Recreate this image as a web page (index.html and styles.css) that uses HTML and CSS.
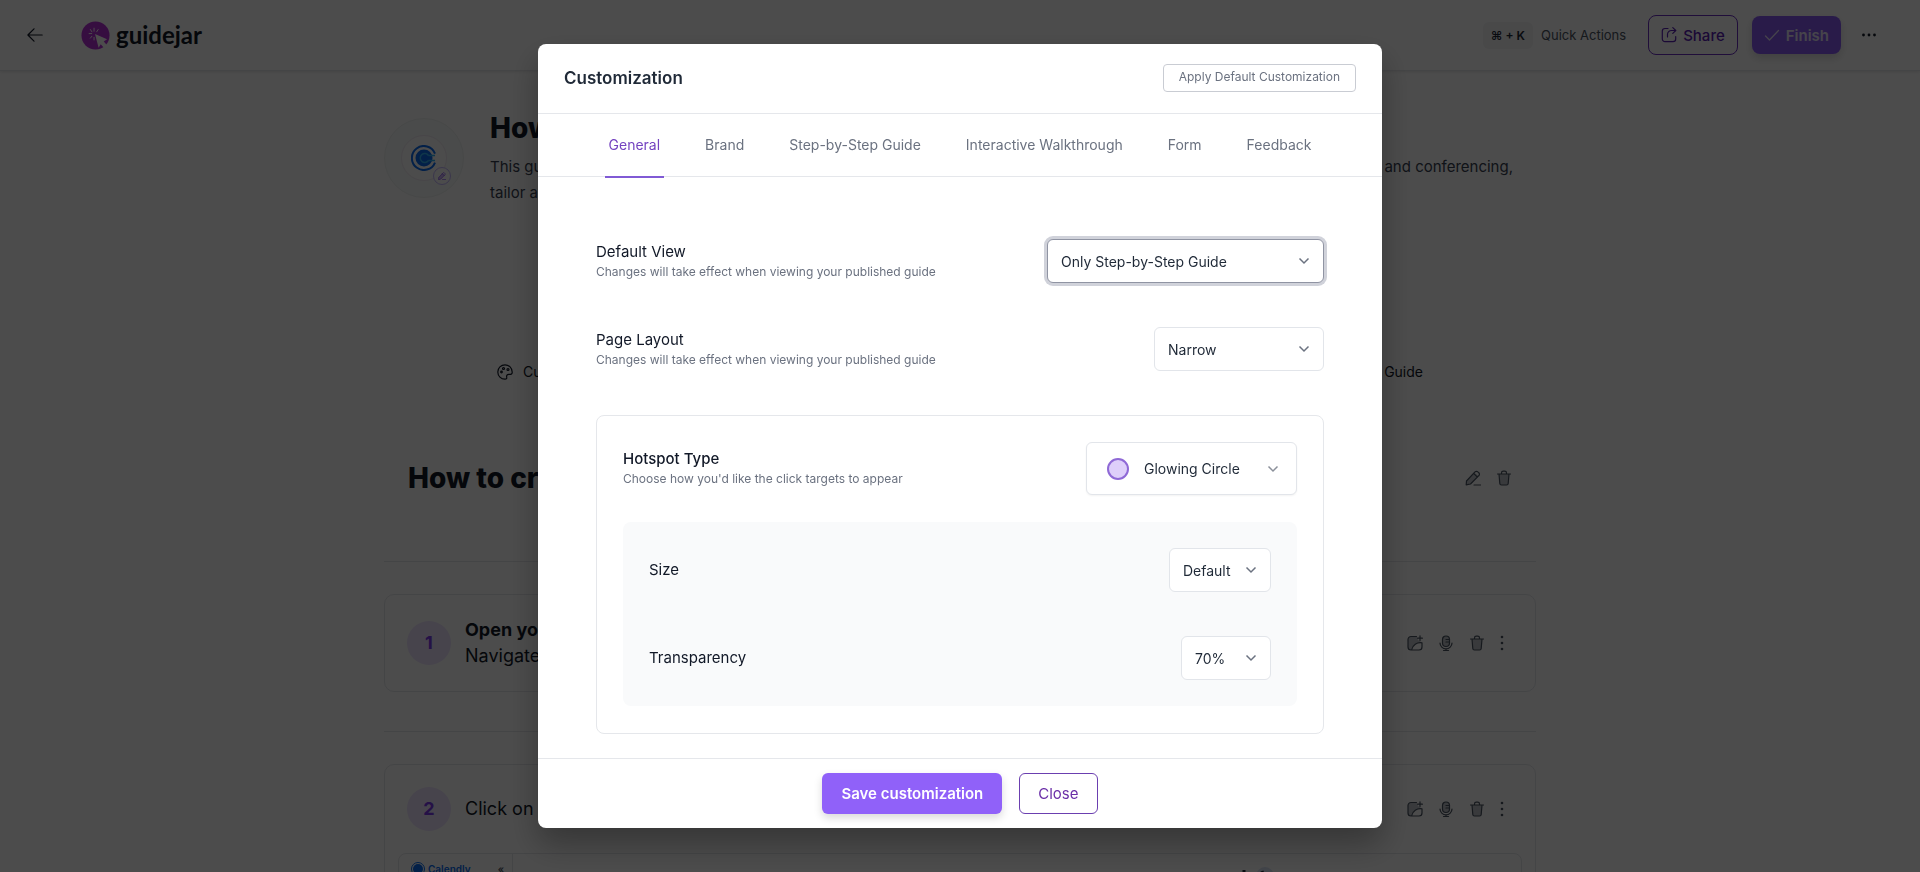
FILE: index.html
```
<!DOCTYPE html>
<html lang="en">
<head>
<meta charset="utf-8">
<meta name="viewport" content="width=device-width, initial-scale=1">
<title>Guidejar – Customization</title>
<link rel="stylesheet" href="styles.css">
</head>
<body>
<svg class="sprite" aria-hidden="true">
  <symbol id="i-trash" viewBox="0 0 16 16"><path class="tint" d="M3 4h10l-.8 9.500a1.600 1.600 0 0 1-1.600 1.500H5.400a1.600 1.600 0 0 1-1.600-1.500z"/><path d="M1.500 4h13M3 4l.8 9.500A1.600 1.600 0 0 0 5.400 15h5.200a1.600 1.600 0 0 0 1.600-1.500L13 4M5.500 4V3A1.800 1.800 0 0 1 7.300 1.200h1.400A1.800 1.800 0 0 1 10.500 3v1"/></symbol>
  <symbol id="i-image" viewBox="0 0 16 16"><path class="tint" d="M1 4.500A2.500 2.500 0 0 1 3.500 2H10l1 3 4 2.800C10 7 5.500 10 4.500 15H3.500A2.500 2.500 0 0 1 1 12.500z"/><path d="M9.500 1.500H4a3 3 0 0 0-3 3V12a3 3 0 0 0 3 3h8a3 3 0 0 0 3-3V7.800M13 .8v4.800M10.600 3.200h4.800M4.500 15c1-5 5.500-8 10.500-7.200"/></symbol>
  <symbol id="i-mic" viewBox="0 0 16 16"><rect class="tint" x="4.500" y="1" width="7" height="10.500" rx="3.500"/><rect x="4.500" y="1" width="7" height="10.500" rx="3.500"/><path d="M2 8a6 5.800 0 0 0 12 0M8 13.800V15.500M5.500 15.500h5M8 4.500h3.500M8 7h3.500"/></symbol>
  <symbol id="i-more" viewBox="0 0 16 16"><g fill="currentColor" stroke="none"><circle cx="8" cy="2" r="1.300"/><circle cx="8" cy="8" r="1.300"/><circle cx="8" cy="14" r="1.300"/></g></symbol>
  <symbol id="i-pen" viewBox="0 0 16 16"><path class="tint" d="M1 11 9 2.500 13.500 6 6 14l-4.800.9z"/><path d="M1.200 14.900 1.500 11 10 1.900a2 2 0 0 1 2.900 0l.9.900a2 2 0 0 1 0 2.900L5.500 14zM8.600 3.400l3.800 3.800M9 15h6.500"/></symbol>
  <symbol id="i-chev" viewBox="0 0 12 12"><path d="M1.500 3.500 6 8l4.500-4.500"/></symbol>
</svg>

<div class="page">
  <header class="topbar">
    <button class="plain back" aria-label="Back"><svg viewBox="0 0 16 16" class="icon"><path d="M15.200 8H1.200M7 1.800.9 8 7 14.200"/></svg></button>
    <a class="brand" href="#">
      <svg viewBox="0 0 30 30" class="brand-mark"><circle cx="15" cy="15" r="14.500" fill="#b630d6"/><path d="M14.500 13.500 27 18.800l-3.500 2.400 3.700 4.200-2.800 3-4-4.300-2.200 3.600z" fill="#fff"/><path d="M13.500 7v4M9.500 8.500l2 3M8 13h3.500M9.500 18l2-2.500M13.500 20v-3.500M18 8.500l-2 3" stroke="#fff" fill="none"/></svg>
      <span>guidejar</span>
    </a>
    <div class="top-actions">
      <span class="quick"><kbd>⌘ + K</kbd>Quick Actions</span>
      <button class="btn outline"><svg viewBox="0 0 16 16" class="icon"><path d="M7 1.500H4A2.700 2.700 0 0 0 1.300 4.200V12A2.700 2.700 0 0 0 4 14.700h8a2.700 2.700 0 0 0 2.700-2.700V9.500M6.500 10V7.500A4 4 0 0 1 10.500 3.500h4.300M11.800.6l3 2.900-3 2.900"/></svg>Share</button>
      <button class="btn solid"><svg viewBox="0 0 16 16" class="icon"><path d="M1.500 9 5.500 13 14.500 3.500"/></svg>Finish</button>
      <button class="plain" aria-label="More"><svg viewBox="0 0 16 16" class="icon"><g fill="currentColor" stroke="none"><circle cx="2.500" cy="8" r="1.400"/><circle cx="8" cy="8" r="1.400"/><circle cx="13.500" cy="8" r="1.400"/></g></svg></button>
    </div>
  </header>

  <main class="content">
    <section class="intro">
      <div class="guide-logo">
        <div class="guide-logo-inner">
          <svg viewBox="0 0 26 26" class="guide-c"><path d="M24 8.500A12 12 0 1 0 24 17.500" fill="none" stroke="#0a6cf0" stroke-width="2"/><circle cx="13" cy="13" r="8.500" fill="#0a6cf0"/><path d="M17.500 10.500a4.500 4.500 0 1 0 0 5M17.500 10.500H24M17.500 15.500H24" fill="none" stroke="#33b5f5" stroke-width="1.500"/></svg>
        </div>
        <button class="logo-edit" aria-label="Edit logo"><svg class="icon tiny"><use href="#i-pen"/></svg></button>
      </div>
      <div class="intro-text">
        <h1>How to create an event</h1>
        <p class="lead"><span>This guide walks you through events in Calendly.</span> <span>Choose location and conferencing,</span></p>
        <p>tailor availability, and share the link.</p>
      </div>
    </section>

    <div class="toolbar">
      <button class="plain"><svg viewBox="0 0 16 16" class="icon"><path d="M8 .8a7.200 7.200 0 1 0 0 14.400c1.500 0 2-.9 1.700-2-.4-1.700.4-2.900 2.100-2.900h1.700c1.200 0 1.800-1 1.700-2.300A7.200 7.200 0 0 0 8 .8z"/><circle cx="4.500" cy="8" r=".8"/><circle cx="6.500" cy="4.500" r="1"/><circle cx="11" cy="5.500" r="1"/></svg>Customize</button>
      <button class="plain">Preview Guide</button>
    </div>

    <div class="chapter">
      <h2>How to create an event</h2>
      <div class="actions">
        <button class="plain" aria-label="Edit"><svg class="icon"><use href="#i-pen"/></svg></button>
        <button class="plain" aria-label="Delete"><svg class="icon"><use href="#i-trash"/></svg></button>
      </div>
    </div>

    <article class="step">
      <div class="step-head">
        <span class="num">1</span>
        <p><b>Open your browser</b><br>Navigate to Calendly</p>
        <div class="actions">
          <button class="plain" aria-label="Add image"><svg class="icon"><use href="#i-image"/></svg></button>
          <button class="plain" aria-label="Record"><svg class="icon"><use href="#i-mic"/></svg></button>
          <button class="plain" aria-label="Delete"><svg class="icon"><use href="#i-trash"/></svg></button>
          <button class="plain more" aria-label="More"><svg class="icon"><use href="#i-more"/></svg></button>
        </div>
      </div>
    </article>

    <hr>

    <article class="step">
      <div class="step-head">
        <span class="num">2</span>
        <p>Click on Create</p>
        <div class="actions">
          <button class="plain" aria-label="Add image"><svg class="icon"><use href="#i-image"/></svg></button>
          <button class="plain" aria-label="Record"><svg class="icon"><use href="#i-mic"/></svg></button>
          <button class="plain" aria-label="Delete"><svg class="icon"><use href="#i-trash"/></svg></button>
          <button class="plain more" aria-label="More"><svg class="icon"><use href="#i-more"/></svg></button>
        </div>
      </div>
      <div class="shot">
        <div class="shot-side"><svg viewBox="0 0 14 14" class="shot-dot"><circle cx="7" cy="7" r="6.500" fill="none" stroke="#0a6cf0"/><circle cx="7" cy="7" r="5" fill="#0a6cf0"/></svg><span class="shot-name">Calendly</span><span class="shot-fold">«</span></div>
        <div class="shot-main"><svg viewBox="0 0 44 20" class="shot-marks"><circle cx="26" cy="10" r="9" fill="#dbe3f5"/><path d="M5 4v10M23 5l3 10M38 7v8" stroke="#222a38" stroke-width="3"/></svg></div>
      </div>
    </article>
  </main>
</div>

<div class="overlay">
  <div class="modal" role="dialog" aria-modal="true" aria-labelledby="dlg-title">
    <div class="modal-head">
      <h3 id="dlg-title">Customization</h3>
      <button class="apply">Apply Default Customization</button>
    </div>
    <nav class="tabs">
      <a href="#" class="tab active">General</a>
      <a href="#" class="tab">Brand</a>
      <a href="#" class="tab">Step-by-Step Guide</a>
      <a href="#" class="tab">Interactive Walkthrough</a>
      <a href="#" class="tab">Form</a>
      <a href="#" class="tab">Feedback</a>
    </nav>
    <div class="modal-body">
      <div class="row">
        <div class="about"><label for="view">Default View</label><p class="hint">Changes will take effect when viewing your published guide</p></div>
        <div class="pick w-view focused"><select id="view"><option>Only Step-by-Step Guide</option></select><svg class="chev"><use href="#i-chev"/></svg></div>
      </div>
      <div class="row">
        <div class="about"><label for="layout">Page Layout</label><p class="hint">Changes will take effect when viewing your published guide</p></div>
        <div class="pick w-layout"><select id="layout"><option>Narrow</option></select><svg class="chev"><use href="#i-chev"/></svg></div>
      </div>
      <section class="card">
        <div class="row">
          <div class="about"><span class="strong" id="hot">Hotspot Type</span><p class="hint">Choose how you'd like the click targets to appear</p></div>
          <button class="type" aria-labelledby="hot hot-value"><span class="dot"></span><span id="hot-value">Glowing Circle</span><svg class="chev-flow"><use href="#i-chev"/></svg></button>
        </div>
        <div class="panel">
          <div class="row">
            <label for="size">Size</label>
            <div class="pick w-size"><select id="size"><option>Default</option></select><svg class="chev"><use href="#i-chev"/></svg></div>
          </div>
          <div class="row">
            <label for="alpha">Transparency</label>
            <div class="pick w-alpha"><select id="alpha"><option>70%</option></select><svg class="chev"><use href="#i-chev"/></svg></div>
          </div>
        </div>
      </section>
    </div>
    <div class="modal-foot">
      <button class="save">Save customization</button>
      <button class="close">Close</button>
    </div>
  </div>
</div>
</body>
</html>
```

FILE: styles.css
```
*, *::before, *::after { box-sizing: border-box; }
body { margin: 0; font-family: Inter, "Open Sans", sans-serif; color: #111827; background: #fff; }
h1, h2, h3, p { margin: 0; }
button, select { font: inherit; color: inherit; cursor: pointer; }
a { text-decoration: none; color: inherit; }
.sprite { display: none; }
.icon { width: 16px; height: 16px; fill: none; stroke: currentColor; stroke-width: 1.2; stroke-linecap: round; stroke-linejoin: round; flex: none; display: block; }
.tiny { width: 8px; height: 8px; }
.tint { fill: currentColor; fill-opacity: .35; stroke: none; }
.plain { border: 0; background: none; padding: 0; display: flex; align-items: center; gap: 10px; }

/* Editor page */
.page { height: 100vh; overflow: hidden; }
.topbar { display: flex; align-items: center; height: 71px; padding: 0 43px 0 27px; border-bottom: 1px solid #e5e7eb; box-shadow: 0 1px 3px rgba(0, 0, 0, .1); }
.brand { display: flex; align-items: center; gap: 6px; margin-left: 38px; font: 700 24px/28px Lato, sans-serif; }
.brand-mark { width: 29px; height: 29px; }
.top-actions { display: flex; align-items: center; gap: 14px; margin-left: auto; }
.top-actions > .plain { margin-left: 6px; }
.quick { display: flex; align-items: center; gap: 8px; margin-right: 8px; font-size: 13px; color: #4b5563; }
kbd { font: 600 12px Inter, "DejaVu Sans", sans-serif; padding: 6px 8px; border-radius: 6px; background: #f3f4f6; color: #1f2937; }
.btn { display: flex; align-items: center; justify-content: center; gap: 6px; min-width: 89px; height: 40px; border-radius: 8px; font-size: 15px; font-weight: 500; padding: 0 12px; }
.outline { background: #fff; border: 1px solid #6b2fc4; color: #5b21b6; }
.solid { height: 38px; border: 0; background: #8b5cf6; color: #e9e3fb; font-weight: 600; box-shadow: 0 4px 8px rgba(0, 0, 0, .15); }

.content { max-width: 1152px; margin: 0 auto; }
.intro { display: flex; gap: 26px; padding: 40px 23px 0 0; min-height: 168px; }
.guide-logo { position: relative; flex: none; width: 80px; height: 80px; margin-top: 7px; padding: 16px; border-radius: 50%; background: #f8fbfa; border: 1px solid #eef2f1; }
.guide-logo-inner { height: 100%; border-radius: 50%; background: #fff; border: 1px solid #f0e9f2; display: grid; place-items: center; }
.guide-c { width: 26px; height: 26px; }
.logo-edit { position: absolute; right: 12px; bottom: 12px; width: 18px; height: 18px; padding: 0; display: grid; place-items: center; border: 1px solid #c4b5fd; border-radius: 50%; background: #fff; color: #7c3aed; }
.intro-text { flex: 1; }
.intro h1, .chapter h2 { font-size: 28px; line-height: 34px; font-weight: 800; }
.intro h1 { margin-bottom: 9px; }
.intro p { font-size: 15px; line-height: 26px; color: #374151; }
.lead { display: flex; justify-content: space-between; }
.toolbar { display: flex; justify-content: space-between; padding: 0 113px; margin-top: 121px; font-size: 14px; line-height: 24px; }
.chapter { display: flex; align-items: center; justify-content: space-between; margin-top: 40px; padding: 36px 24px 66px; border-bottom: 1px solid #e5e7eb; min-height: 138px; }
.actions { display: flex; gap: 15px; color: #4b5563; margin-left: auto; }
.actions .more { margin-left: -6px; }
.step { margin-top: 32px; border: 1px solid #e5e7eb; border-radius: 10px; padding: 22px; }
.step-head { display: flex; align-items: center; gap: 14px; min-height: 44px; padding-right: 3px; font-size: 18px; line-height: 26px; }
.num { width: 44px; height: 44px; border-radius: 50%; display: grid; place-items: center; background: #ede4ff; color: #7c3aed; font-weight: 700; }
hr { margin: 39px 0 0; border: 0; border-top: 1px solid #e5e7eb; }
.shot { display: flex; height: 200px; margin: 22px -9px 0; border: 1px solid #e5e7eb; border-radius: 8px; }
.shot-side { display: flex; align-items: flex-start; gap: 3px; width: 114px; padding: 8px 8px 0 12px; border-right: 1px solid #e5e7eb; color: #0a6cf0; font-size: 10px; line-height: 14px; font-weight: 600; }
.shot-dot { width: 14px; height: 14px; }
.shot-fold { margin-left: auto; color: #4b5563; }
.shot-main { flex: 1; display: flex; justify-content: flex-end; padding: 12px 238px 0 0; }
.shot-marks { width: 44px; height: 20px; }

/* Dialog */
.overlay { position: fixed; inset: 0; display: flex; align-items: center; justify-content: center; padding: 44px 24px; background: rgba(0, 0, 0, .7); }
.modal { display: flex; flex-direction: column; width: 100%; max-width: 844px; max-height: 100%; background: #fff; border-radius: 8px; overflow: hidden; box-shadow: 0 16px 32px rgba(0, 0, 0, .3); }
.modal-head { display: flex; align-items: center; justify-content: space-between; padding: 20px 26px 21px; border-bottom: 1px solid #e5e7eb; }
.modal-head h3 { font-size: 17px; line-height: 28px; font-weight: 600; color: #1f2937; }
.apply { height: 28px; padding: 0 15px 3px; border: 1px solid #c9ccd3; border-radius: 4px; background: #fff; color: #6b7280; font-size: 12px; }
.tabs { display: flex; justify-content: center; gap: 37px; border-bottom: 1px solid #e5e7eb; }
.tab { padding: 21px 4px 21px; margin-bottom: -2px; border-bottom: 2px solid transparent; font-size: 14px; line-height: 20px; color: #6b7280; }
.tab.active { position: relative; color: #7443c0; border-color: #805ad5; }
.modal-body { padding: 62px 58px 24px; overflow: auto; }
.row { display: flex; align-items: center; justify-content: space-between; gap: 16px; }
.modal-body > .row { min-height: 44px; margin-bottom: 44px; }
.row label, .strong { display: block; font-size: 15px; line-height: 24px; color: #111827; }
.strong { font-weight: 500; }
.about { padding-bottom: 3px; }
.hint { font-size: 12px; line-height: 16px; color: #6b7280; }
.pick { position: relative; }
.pick select { appearance: none; width: 100%; height: 44px; padding: 1px 32px 0 13px; border: 1px solid #e2e5ea; border-radius: 6px; background: #fff; color: #1f2937; font-size: 14px; display: block; }
.focused select { border-color: #9094a3; box-shadow: 0 0 0 3px #d0d2da; outline: 0; }
.chev { position: absolute; right: 14px; top: 16px; pointer-events: none; }
.chev, .chev-flow { width: 12px; height: 12px; fill: none; stroke: #6b7280; stroke-width: 1.5; }
.w-view { width: 277px; }
.w-layout { width: 170px; }
.w-size { width: 102px; }
.w-alpha { width: 90px; }
.card { border: 1px solid #e5e7eb; border-radius: 8px; padding: 26px 26px 27px; }
.type { display: flex; align-items: center; gap: 15px; width: 211px; height: 53px; padding: 0 17px 0 20px; border: 1px solid #e2e5ea; border-radius: 6px; background: #fff; color: #1f2937; font-size: 14px; box-shadow: 0 1px 2px rgba(0, 0, 0, .05); }
.chev-flow { margin-left: auto; stroke: #8b909a; }
.dot { width: 22px; height: 22px; border: 2px solid #8f69d6; border-radius: 50%; background: #decffa; }
.panel { display: grid; gap: 44px; margin-top: 27px; padding: 26px; border-radius: 8px; background: #f9fafb; }
.modal-foot { display: flex; align-items: center; justify-content: center; gap: 17px; padding: 14px; border-top: 1px solid #e5e7eb; }
.save, .close { height: 41px; border-radius: 6px; font-size: 15px; }
.save { padding: 0 19px; border: 0; background: #9061f9; color: #fff; font-weight: 600; box-shadow: 0 4px 8px rgba(0, 0, 0, .15); }
.close { padding: 0 18px; border: 1px solid #6b3fb0; background: #fff; color: #6b2fa8; }
```
